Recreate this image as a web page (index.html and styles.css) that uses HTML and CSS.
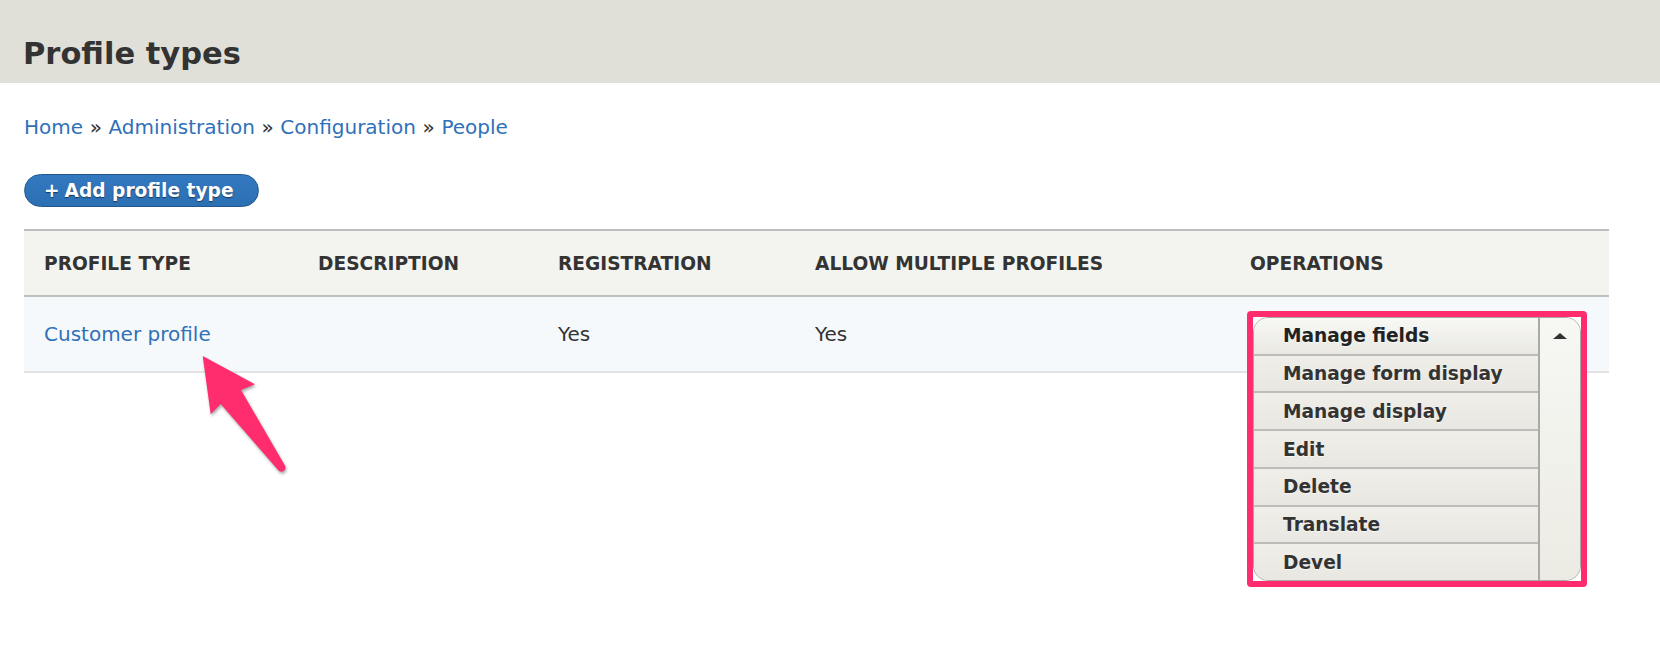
FILE: index.html
```html
<!DOCTYPE html>
<html lang="en">
<head>
<meta charset="utf-8">
<title>Profile types</title>
<link rel="stylesheet" href="styles.css">
</head>
<body>
<header class="page-header">
  <h1 class="page-title">Profile types</h1>
</header>
<main class="content">
  <nav class="breadcrumb">
    <a href="#">Home</a><span class="sep">»</span><a href="#">Administration</a><span class="sep">»</span><a href="#">Configuration</a><span class="sep">»</span><a href="#">People</a>
  </nav>
  <div class="action-links">
    <a class="button-action" href="#"><span class="plus">+</span>Add profile type</a>
  </div>
  <table class="profile-table">
    <colgroup>
      <col class="c1"><col class="c2"><col class="c3"><col class="c4"><col class="c5">
    </colgroup>
    <thead>
      <tr>
        <th>Profile type</th>
        <th>Description</th>
        <th>Registration</th>
        <th>Allow multiple profiles</th>
        <th>Operations</th>
      </tr>
    </thead>
    <tbody>
      <tr>
        <td><a href="#">Customer profile</a></td>
        <td></td>
        <td>Yes</td>
        <td>Yes</td>
        <td class="ops">
          <div class="highlight">
            <div class="dropbutton">
              <ul class="dropbutton-list">
                <li class="first">Manage fields</li>
                <li>Manage form display</li>
                <li>Manage display</li>
                <li>Edit</li>
                <li>Delete</li>
                <li>Translate</li>
                <li>Devel</li>
              </ul>
              <div class="dropbutton-toggle"><span class="tri"></span></div>
            </div>
          </div>
        </td>
      </tr>
    </tbody>
  </table>
</main>
<svg class="callout-arrow" width="110" height="130" viewBox="190 350 110 130" aria-hidden="true">
  <path d="M202.7,356 L255,384.3 L241,390 L285.5,466.5 Q285,473.5 279,471 L220.7,404 L210.7,414.3 Z" fill="#ff2d6e"/>
</svg>
</body>
</html>
```
FILE: styles.css
```css
html, body {
  margin: 0;
  padding: 0;
  background: #ffffff;
}
body {
  font-family: "DejaVu Sans", "Liberation Sans", sans-serif;
  color: #333333;
  position: relative;
  min-height: 650px;
}
a {
  color: #2f71b8;
  text-decoration: none;
}
.page-header {
  background: #e0e0d8;
  height: 83px;
  box-sizing: border-box;
  padding: 35px 0 0 23px;
}
.page-title {
  margin: 0;
  font-size: 30.5px;
  line-height: 37px;
  font-weight: bold;
  color: #333333;
}
.content {
  padding: 0 51px 0 24px;
}
.breadcrumb {
  margin-top: 32px;
  font-size: 20px;
  line-height: 24px;
}
.breadcrumb .sep {
  color: #333;
  margin: 0 6.6px;
}
.action-links {
  margin-top: 35px;
}
.button-action {
  display: inline-flex;
  align-items: center;
  box-sizing: border-box;
  height: 33px;
  padding: 0 24px 0 19px;
  border: 1px solid #23578f;
  border-radius: 17px;
  background: linear-gradient(#3379c0, #2c6fb3);
  color: #ffffff;
  font-weight: bold;
  font-size: 18.6px;
  text-shadow: 0 1px 1px rgba(0,0,0,0.5);
}
.button-action .plus {
  margin-right: 5px;
}
.profile-table {
  margin-top: 22px;
  width: 1585px;
  border-collapse: collapse;
  table-layout: fixed;
  border-top: 2px solid #bdbdbb;
}
.c1 { width: 274px; }
.c2 { width: 240px; }
.c3 { width: 257px; }
.c4 { width: 435px; }
.c5 { width: 379px; }
.profile-table thead tr {
  background: #f3f3ef;
  border-bottom: 2px solid #bfbfbd;
}
.profile-table th {
  height: 64px;
  padding: 0 20px;
  text-align: left;
  font-size: 18.6px;
  font-weight: bold;
  text-transform: uppercase;
  color: #333;
  vertical-align: middle;
  white-space: nowrap;
}
.profile-table tbody tr {
  background: #f6f9fc;
  border-bottom: 2px solid #e3e3e3;
}
.profile-table td {
  height: 74px;
  padding: 0 20px;
  font-size: 20px;
  vertical-align: middle;
}
.profile-table td.ops {
  position: relative;
}
.highlight {
  position: absolute;
  top: 14px;
  left: 17px;
  z-index: 2;
  border: 6px solid #ff2d6e;
  border-radius: 4px;
  background: #ffffff;
}
.dropbutton {
  display: flex;
  width: 328px;
  height: 264px;
  box-sizing: border-box;
  border: 1px solid #a9a9a6;
  border-radius: 15px;
  overflow: hidden;
  background: #ecebe5;
}
.dropbutton-list {
  list-style: none;
  margin: 0;
  padding: 0;
  width: 284px;
  border-right: 2px solid #a9a9a6;
  display: flex;
  flex-direction: column;
}
.dropbutton-list li {
  flex: 1;
  display: flex;
  align-items: center;
  padding-left: 29px;
  font-size: 18.6px;
  font-weight: bold;
  color: #333;
  text-shadow: 0 1px 0 rgba(255,255,255,0.7);
  background: linear-gradient(#efeee9, #e8e7e1);
  border-bottom: 2px solid #bcbcb8;
}
.dropbutton-list li:last-child {
  border-bottom: 0;
}
.dropbutton-list li.first {
  background: linear-gradient(#f8f8f5, #e9e8e2);
  color: #222;
}
.dropbutton-toggle {
  flex: 1;
  display: flex;
  justify-content: center;
  padding-top: 15px;
  background: linear-gradient(#f7f7f4, #ecebe3);
}
.tri {
  width: 0;
  height: 0;
  border-left: 7px solid transparent;
  border-right: 7px solid transparent;
  border-bottom: 6px solid #333;
}
.callout-arrow {
  position: absolute;
  left: 190px;
  top: 350px;
  z-index: 3;
  filter: drop-shadow(1px 2px 1.5px rgba(0,0,0,0.35));
}
```
